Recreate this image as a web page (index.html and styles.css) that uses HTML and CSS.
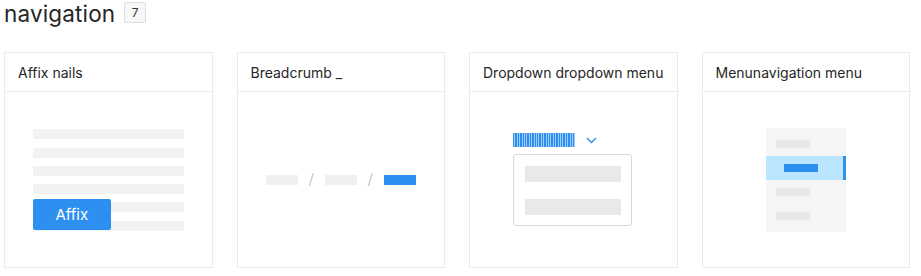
FILE: index.html
```html
<!DOCTYPE html>
<html lang="en">
<head>
    <meta charset="UTF-8">
    <meta name="viewport" content="width=device-width, initial-scale=1.0">
    <title>navigation</title>
    <link rel="stylesheet" href="styles.css">
</head>
<body>
    <div class="page">
        <div class="title-row">
            <h1>navigation</h1>
            <span class="count">7</span>
        </div>

        <div class="cards">
            <!-- Affix -->
            <div class="card">
                <div class="card-head">Affix nails</div>
                <div class="card-body">
                    <div class="affix-demo">
                        <div class="line"></div>
                        <div class="line"></div>
                        <div class="line"></div>
                        <div class="line"></div>
                        <div class="line"></div>
                        <div class="line"></div>
                        <div class="affix-btn">Affix</div>
                    </div>
                </div>
            </div>

            <!-- Breadcrumb -->
            <div class="card">
                <div class="card-head">Breadcrumb _</div>
                <div class="card-body">
                    <div class="crumbs">
                        <span class="crumb"></span>
                        <span class="sep">/</span>
                        <span class="crumb"></span>
                        <span class="sep">/</span>
                        <span class="crumb active"></span>
                    </div>
                </div>
            </div>

            <!-- Dropdown -->
            <div class="card">
                <div class="card-head">Dropdown dropdown menu</div>
                <div class="card-body">
                    <div class="dropdown">
                        <div class="trigger">
                            <span class="stripes"></span>
                            <svg class="chevron" width="11" height="7" viewBox="0 0 11 7">
                                <path d="M1 1 L5.5 5.5 L10 1" fill="none" stroke="#2d8cf0" stroke-width="1.4"/>
                            </svg>
                        </div>
                        <div class="drop-box">
                            <div class="drop-item"></div>
                            <div class="drop-item"></div>
                        </div>
                    </div>
                </div>
            </div>

            <!-- Menu -->
            <div class="card">
                <div class="card-head">Menunavigation menu</div>
                <div class="card-body">
                    <div class="menu">
                        <div class="menu-row"><span class="menu-bar"></span></div>
                        <div class="menu-row selected"><span class="menu-bar"></span></div>
                        <div class="menu-row"><span class="menu-bar"></span></div>
                        <div class="menu-row"><span class="menu-bar"></span></div>
                    </div>
                </div>
            </div>
        </div>
    </div>
</body>
</html>
```

FILE: styles.css
```css
body {
    margin: 0;
    background: #fff;
    color: #262626;
    font-family: Inter, "Liberation Sans", sans-serif;
}
.page {
    padding: 0 11px 0 4px;
}
.title-row {
    display: flex;
    align-items: flex-start;
    gap: 9px;
}
h1 {
    margin: 0;
    font-size: 22.5px;
    line-height: normal;
    font-weight: 400;
    letter-spacing: 0.15px;
}
.count {
    display: flex;
    align-items: center;
    justify-content: center;
    width: 20px;
    height: 19px;
    margin-top: 2px;
    border: 1px solid #dedede;
    border-radius: 2px;
    background: #f7f7f7;
    font-size: 12px;
    color: #333;
}
.cards {
    display: grid;
    grid-template-columns: repeat(4, 1fr);
    gap: 24px;
    margin-top: 25px;
}
.card {
    border: 1px solid #ebebeb;
    background: #fff;
}
.card-head {
    height: 38px;
    display: flex;
    align-items: center;
    padding: 0 13px;
    border-bottom: 1px solid #ebebeb;
    font-size: 14px;
    color: #262626;
}
.card-body {
    height: 175px;
    display: flex;
    align-items: center;
    justify-content: center;
}

/* affix */
.affix-demo {
    position: relative;
    width: 151px;
    display: flex;
    flex-direction: column;
    gap: 8.3px;
    margin-top: 1px;
}
.line {
    height: 10px;
    background: #f2f2f2;
}
.affix-btn {
    position: absolute;
    left: 0;
    top: 70px;
    width: 78px;
    height: 31px;
    display: flex;
    align-items: center;
    justify-content: center;
    background: #2d8ff0;
    border-radius: 2px;
    color: #fff;
    font-size: 15px;
}

/* breadcrumb */
.crumbs {
    display: flex;
    align-items: center;
}
.crumb {
    width: 32px;
    height: 10px;
    background: #f0f0f0;
}
.crumb.active {
    background: #2d8ff0;
}
.sep {
    width: 27px;
    text-align: center;
    font-size: 15px;
    color: #aaa;
    font-family: "DejaVu Sans", sans-serif;
    font-weight: 200;
}

/* dropdown */
.dropdown {
    width: 119px;
    margin-left: -1px;
}
.trigger {
    display: flex;
    align-items: center;
    height: 14px;
}
.stripes {
    width: 62px;
    height: 14px;
    background: repeating-linear-gradient(90deg, #2d8ff0 0 1.4px, #9ccbfa 1.4px 2.4px);
}
.chevron {
    margin-left: 11px;
    margin-top: 1px;
}
.drop-box {
    margin-top: 7px;
    border: 1px solid #d9d9d9;
    border-radius: 3px;
    padding: 11px 10px 10px 11px;
    display: flex;
    flex-direction: column;
    gap: 17px;
}
.drop-item {
    height: 16px;
    background: #e9e9e9;
}

/* menu */
.menu {
    width: 80px;
    padding: 4px 0;
    background: #f5f5f5;
}
.menu-row {
    height: 24px;
    display: flex;
    align-items: center;
    padding-left: 10px;
}
.menu-bar {
    width: 34px;
    height: 8px;
    background: #e8e8e8;
}
.menu-row.selected {
    background: #bae7ff;
    padding-left: 18px;
    box-shadow: inset -3px 0 0 #2d8ff0;
}
.menu-row.selected .menu-bar {
    background: #2d8ff0;
}
```
